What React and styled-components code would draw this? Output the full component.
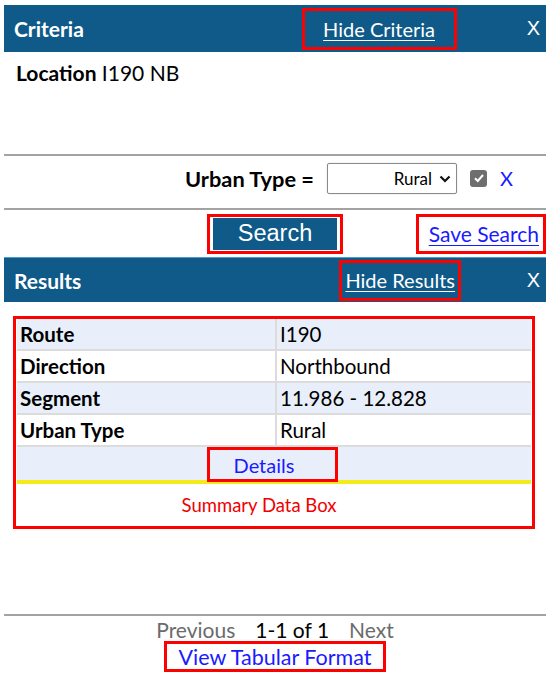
import React from 'react';
import styled, { createGlobalStyle } from 'styled-components';

const Global = createGlobalStyle`
  html, body {
    margin: 0;
    padding: 0;
    background: #ffffff;
  }
  body {
    font-family: Lato, 'Open Sans', sans-serif;
    color: #000;
  }
`;

const rows = [
  { label: 'Route', value: 'I190' },
  { label: 'Direction', value: 'Northbound' },
  { label: 'Segment', value: '11.986 - 12.828' },
  { label: 'Urban Type', value: 'Rural' },
];

function App() {
  return (
    <>
      <Global />
      <Page>
        <Bar>
          <BarTitle>Criteria</BarTitle>
          <Marked $pad="0 19px 0 18px" $h="42px">
            <HideLink href="#criteria">Hide Criteria</HideLink>
          </Marked>
          <Close>X</Close>
        </Bar>
        <CriteriaBody>
          <b>Location</b> I190 NB
        </CriteriaBody>
        <FilterRow>
          <FilterLabel>Urban Type =</FilterLabel>
          <SelectWrap>
            <Select defaultValue="Rural">
              <option>Rural</option>
              <option>Urban</option>
            </Select>
            <Chevron width="12" height="8" viewBox="0 0 12 8">
              <path d="M1.5 1.5 L6 6 L10.5 1.5" fill="none" stroke="#111" strokeWidth="2.2" />
            </Chevron>
          </SelectWrap>
          <Check>
            <svg width="12" height="12" viewBox="0 0 12 12">
              <path d="M2 6.2 L4.8 9 L10 3" fill="none" stroke="#fff" strokeWidth="2" />
            </svg>
          </Check>
          <RemoveX>X</RemoveX>
        </FilterRow>
        <ActionRow>
          <span />
          <Marked $pad="3px" $h="40px">
            <SearchButton>Search</SearchButton>
          </Marked>
          <SaveBox>
            <Marked $pad="0 4px 0 10px" $h="40px">
              <SaveLink href="#save">Save Search</SaveLink>
            </Marked>
          </SaveBox>
        </ActionRow>
        <Bar $results>
          <BarTitle>Results</BarTitle>
          <Marked $pad="0 3px 0 3px" $h="41px">
            <HideLink href="#results">Hide Results</HideLink>
          </Marked>
          <Close $w="85px">X</Close>
        </Bar>
        <ResultsArea>
          <SummaryBox>
            <Table>
              <tbody>
                {rows.map((r, i) => (
                  <tr key={r.label}>
                    <LabelCell $alt={i % 2 === 0}>{r.label}</LabelCell>
                    <ValueCell $alt={i % 2 === 0}>{r.value}</ValueCell>
                  </tr>
                ))}
                <tr>
                  <DetailsCell colSpan={2}>
                    <DetailsMark>
                      <BlueLink href="#details">Details</BlueLink>
                    </DetailsMark>
                  </DetailsCell>
                </tr>
              </tbody>
            </Table>
            <SummaryNote>Summary Data Box</SummaryNote>
          </SummaryBox>
        </ResultsArea>
        <Pager>
          <PageNav>
            <Dim>Previous</Dim>
            <span>1-1 of 1</span>
            <Dim>Next</Dim>
          </PageNav>
          <TabularMark>
            <BlueLink href="#tabular" $size="21.5px">View Tabular Format</BlueLink>
          </TabularMark>
        </Pager>
      </Page>
    </>
  );
}

const Page = styled.div`
  padding: 5px 0 0 4px;
  width: 542px;
`;

const Bar = styled.div`
  height: ${p => (p.$results ? '45px' : '47px')};
  background: #0f5a88;
  border-top: ${p => (p.$results ? '1px solid #4f9ccc' : 'none')};
  display: flex;
  align-items: center;
  padding-left: 10px;
  box-sizing: border-box;
`;

const BarTitle = styled.div`
  flex: 1;
  color: #fff;
  font-weight: 700;
  font-size: 21px;
`;

const Marked = styled.div`
  border: 3px solid #ff0000;
  height: ${p => p.$h};
  padding: ${p => p.$pad};
  box-sizing: border-box;
  display: flex;
  align-items: center;
  justify-content: center;
`;

const HideLink = styled.a`
  color: #fff;
  font-size: 20px;
  text-decoration: underline;
  text-underline-offset: 3px;
  text-decoration-thickness: 1px;
`;

const Close = styled.div`
  width: ${p => p.$w || '89px'};
  text-align: right;
  padding-right: 6px;
  box-sizing: border-box;
  color: #fff;
  font-size: 20px;
  font-family: 'Liberation Sans', Arial, sans-serif;
`;

const CriteriaBody = styled.div`
  height: 104px;
  padding: 8px 0 0 12px;
  box-sizing: border-box;
  font-size: 21px;
  border-bottom: 2px solid #a3a3a3;
`;

const FilterRow = styled.div`
  height: 54px;
  display: flex;
  align-items: center;
  justify-content: flex-end;
  padding: 0 33px 8px 0;
  box-sizing: border-box;
  border-bottom: 2px solid #a3a3a3;
`;

const FilterLabel = styled.div`
  font-weight: 700;
  font-size: 21.8px;
  margin-right: 13px;
`;

const SelectWrap = styled.div`
  position: relative;
  width: 130px;
  height: 31px;
`;

const Select = styled.select`
  appearance: none;
  width: 100%;
  height: 100%;
  border: 1px solid #8a8a8a;
  border-radius: 2px;
  background: #fff;
  font-family: Lato, 'Open Sans', sans-serif;
  font-size: 17px;
  text-align: right;
  text-align-last: right;
  padding: 0 24px 0 4px;
  box-shadow: 0 0 2px rgba(0, 0, 0, 0.15);
`;

const Chevron = styled.svg`
  position: absolute;
  right: 6px;
  top: 12px;
  pointer-events: none;
`;

const Check = styled.div`
  width: 17px;
  height: 17px;
  margin-left: 13px;
  border-radius: 3px;
  background: #6e6e6e;
  display: flex;
  align-items: center;
  justify-content: center;
`;

const RemoveX = styled.div`
  margin-left: 13px;
  color: #1a1aff;
  font-size: 20px;
`;

const ActionRow = styled.div`
  height: 47px;
  display: grid;
  grid-template-columns: 1fr auto 1fr;
  align-items: center;
`;

const SearchButton = styled.button`
  width: 124px;
  height: 32px;
  border: none;
  background: #0f5a88;
  color: #fff;
  font-family: 'Liberation Sans', Arial, sans-serif;
  font-size: 23.5px;
  padding: 0;
`;

const SaveBox = styled.div`
  justify-self: end;
`;

const SaveLink = styled.a`
  color: #1a1aff;
  font-size: 21px;
  text-decoration: underline;
  text-underline-offset: 3px;
  text-decoration-thickness: 1px;
`;

const ResultsArea = styled.div`
  height: 314px;
  padding: 14px 11px 0 9px;
  box-sizing: border-box;
  border-bottom: 2px solid #a3a3a3;
`;

const SummaryBox = styled.div`
  border: 3px solid #ff0000;
  padding: 0 1px;
`;

const Table = styled.table`
  width: 100%;
  border-collapse: collapse;
  border-bottom: 4px solid #f5ea1c;
`;

const Cell = styled.td`
  height: 30px;
  padding: 0 0 0 3px;
  font-size: 20.5px;
  line-height: 1;
  background: ${p => (p.$alt ? '#e8effb' : '#fff')};
  border: 2px solid #dcdcdc;
  border-left: none;
  border-top: none;
`;

const LabelCell = styled(Cell)`
  width: 255px;
  font-weight: 700;
`;

const ValueCell = styled(Cell)`
  border-right: none;
`;

const DetailsCell = styled.td`
  background: #e8effb;
  height: 32px;
  padding: 0;
  text-align: center;
`;

const DetailsMark = styled.div`
  display: inline-flex;
  align-items: center;
  justify-content: center;
  width: 131px;
  height: 35px;
  box-sizing: border-box;
  padding-right: 16px;
  border: 3px solid #ff0000;
  margin: 0 0 -2px -4px;
`;

const BlueLink = styled.a`
  color: #1a1aff;
  font-size: ${p => p.$size || '20px'};
  text-decoration: none;
`;

const SummaryNote = styled.div`
  height: 42px;
  display: flex;
  align-items: center;
  justify-content: center;
  padding-right: 30px;
  color: #f00000;
  font-size: 18.5px;
`;

const Pager = styled.div`
  display: flex;
  flex-direction: column;
  align-items: center;
  padding-top: 2px;
`;

const PageNav = styled.div`
  display: flex;
  gap: 20px;
  font-size: 21px;
  line-height: 1.1;
`;

const Dim = styled.span`
  color: #6b6b6b;
`;

const TabularMark = styled.div`
  border: 3px solid #ff0000;
  padding: 0 11px;
  height: 31px;
  box-sizing: border-box;
  display: flex;
  align-items: center;
`;

export default App;
